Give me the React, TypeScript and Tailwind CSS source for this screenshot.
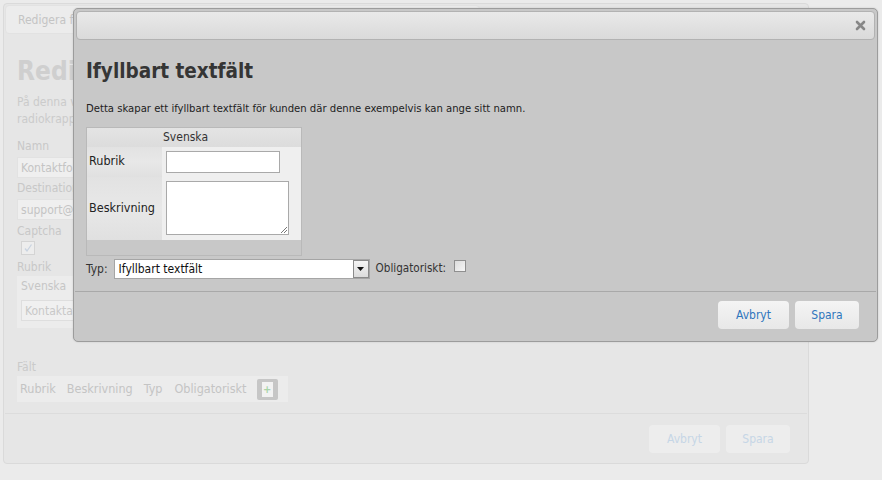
import React from "react";

const font = "font-['DejaVu_Sans_Condensed','DejaVu_Sans',sans-serif]";

function FadedField({ value }: { value: string }) {
  return (
    <div className="mt-[4px] flex h-[21px] w-[200px] items-center border border-[#e2e2e2] bg-[#efefef] px-[3px] text-[12px] text-[#c4c4c4]">
      {value}
    </div>
  );
}

function Background() {
  return (
    <div className="ml-[3px] mt-[3px] flex h-[461px] w-[806px] flex-col rounded-[4px] border border-[#dadada] bg-[#e6e6e6]">
      <div className="ml-[1px] mt-[1px] flex h-[29px] w-[475px] items-center rounded-[4px] border border-[#e2e2e2] bg-[#ececec] px-[12px] text-[12px] text-[#c4c4c4]">
        Redigera formulär
      </div>

      <div className="flex flex-1 flex-col px-[13px]">
        <h1 className="mt-[20px] text-[26px] font-bold leading-[34px] text-[#cfcfcf]">
          Redigera formulär
        </h1>
        <p className="mt-[6px] text-[12px] leading-[17px] text-[#cbcbcb]">
          På denna vy kan du redigera formuläret som visas i
          <br />
          radiokrappen
        </p>

        <div className="mt-[11px] text-[12px] leading-[14px] text-[#c8c8c8]">Namn</div>
        <FadedField value="Kontaktformulär" />
        <div className="mt-[3px] text-[12px] leading-[14px] text-[#c8c8c8]">Destination</div>
        <FadedField value="support@radiokrappen.se" />
        <div className="mt-[4px] text-[12px] leading-[14px] text-[#c8c8c8]">Captcha</div>
        <div className="ml-[4px] mt-[3px] flex h-[14px] w-[14px] items-center justify-center border border-[#d4d4d4] bg-[#ededed]">
          <svg width="10" height="10" viewBox="0 0 10 10">
            <path d="M2 5.5 L4 8 L8.5 1.5" fill="none" stroke="#c9d3e0" strokeWidth="1.3" />
          </svg>
        </div>
        <div className="mt-[5px] text-[12px] leading-[14px] text-[#c8c8c8]">Rubrik</div>
        <div className="mt-[2px] h-[52px] w-[260px] bg-[#ececec] px-[4px] pt-[3px]">
          <div className="text-[12px] leading-[15px] text-[#c6c6c6]">Svenska</div>
          <div className="mt-[6px] flex h-[21px] w-[240px] items-center border border-[#dedede] bg-[#f0f0f0] px-[3px] text-[12px] text-[#c8c8c8]">
            Kontaktaformulär
          </div>
        </div>

        <div className="mt-[32px] text-[12px] leading-[14px] text-[#cacaca]">Fält</div>
        <div className="mt-[2px] flex h-[26px] w-[271px] items-center bg-[#ececec] pl-[3px] text-[12.5px] text-[#c4c4c4]">
          <span>Rubrik</span>
          <span className="ml-[11px]">Beskrivning</span>
          <span className="ml-[11px]">Typ</span>
          <span className="ml-[12px]">Obligatoriskt</span>
          <span className="ml-[10px] flex h-[21px] w-[21px] items-center justify-center rounded-[2px] bg-[#c6c6c6]">
            <span className="flex h-[15px] w-[11px] items-center justify-center bg-[#f2f2f2] text-[11px] font-bold leading-none text-[#a8d4a8]">
              +
            </span>
          </span>
        </div>
      </div>

      <div className="mx-[1px] flex h-[50px] items-center justify-end gap-[6px] border-t border-[#dcdcdc] pr-[17px]">
        <div className="flex h-[28px] w-[71px] items-center justify-center rounded-[4px] bg-[#ededed] text-[12px] text-[#c6d6e6]">
          Avbryt
        </div>
        <div className="flex h-[28px] w-[64px] items-center justify-center rounded-[4px] bg-[#ededed] text-[12px] text-[#c6d6e6]">
          Spara
        </div>
      </div>
    </div>
  );
}

function Modal() {
  return (
    <div className="absolute left-[73px] top-[8px] flex h-[334px] w-[805px] flex-col rounded-[5px] border border-[#9c9c9c] bg-[#c8c8c8] shadow-[0_0_2px_rgba(0,0,0,0.15)]">
      <div className="mx-[2px] mt-[2px] flex h-[29px] items-center justify-end rounded-[4px] border border-[#b2b2b2] bg-gradient-to-b from-[#e9e9e9] to-[#dadada] pr-[8px]">
        <svg width="11" height="11" viewBox="0 0 11 11">
          <path d="M2 2 L9 9 M9 2 L2 9" stroke="#878787" strokeWidth="2.6" strokeLinecap="round" />
        </svg>
      </div>

      <div className="flex flex-1 flex-col px-[12px]">
        <h2 className="mt-[12px] text-[20.5px] font-bold leading-[38px] text-[#353535]">
          Ifyllbart textfält
        </h2>
        <p className="mt-[12px] text-[11.2px] leading-[14px] text-[#222]">
          Detta skapar ett ifyllbart textfält för kunden där denne exempelvis kan ange sitt namn.
        </p>

        <div className="mt-[11px] flex h-[129px] w-[216px] flex-col border border-[#b9b9b9]">
          <div className="flex h-[19px] shrink-0 bg-gradient-to-b from-[#e4e4e4] to-[#dcdcdc] text-[12px] leading-[19px] text-[#333]">
            <div className="w-[75px]" />
            <div className="pl-[1px]">Svenska</div>
          </div>
          <div className="flex h-[30px] shrink-0">
            <div className="flex w-[75px] items-center bg-gradient-to-b from-[#e2e2e2] via-[#e8e8e8] to-[#e0e0e0] pl-[2px] text-[12.5px] text-[#222]">
              Rubrik
            </div>
            <div className="flex-1 bg-[#efefef] pl-[4px] pt-[4px]">
              <div className="h-[22px] w-[114px] border border-[#a9a9a9] bg-white" />
            </div>
          </div>
          <div className="flex h-[63px] shrink-0">
            <div className="flex w-[75px] items-center bg-gradient-to-b from-[#e2e2e2] via-[#e8e8e8] to-[#e0e0e0] pl-[2px] text-[12.5px] text-[#222]">
              Beskrivning
            </div>
            <div className="flex-1 bg-[#efefef] pl-[4px] pt-[4px]">
              <div className="relative h-[54px] w-[123px] border border-[#a9a9a9] bg-white">
                <svg className="absolute bottom-[1px] right-[1px]" width="7" height="7" viewBox="0 0 7 7">
                  <path d="M1 7 L7 1 M4 7 L7 4" stroke="#777" strokeWidth="1" />
                </svg>
              </div>
            </div>
          </div>
        </div>

        <div className="mt-[3px] flex items-center text-[12px] text-[#333]">
          <span>Typ:</span>
          <div className="ml-[6px] flex h-[20px] w-[256px] items-center border border-[#a5a5a5] bg-white">
            <span className="flex-1 pl-[4px] text-[12px] text-[#111]">Ifyllbart textfält</span>
            <span className="flex h-[18px] w-[16px] items-center justify-center border border-[#8a8a8a] bg-gradient-to-b from-[#f4f4f4] to-[#dcdcdc]">
              <svg width="7" height="4" viewBox="0 0 7 4">
                <path d="M0 0 H7 L3.5 4 Z" fill="#111" />
              </svg>
            </span>
          </div>
          <span className="ml-[6px] text-[11.6px]">Obligatoriskt:</span>
          <span className="-mt-[6px] ml-[8px] h-[12px] w-[12px] border border-[#8f8f8f] bg-gradient-to-br from-[#dcdcdc] to-[#f6f6f6]" />
        </div>
      </div>

      <div className="mx-[1px] mt-[12px] flex h-[51px] items-start justify-end gap-[6px] border-t border-[#a9a9a9] pr-[17px] pt-[9px]">
        <div className="flex h-[28px] w-[71px] items-center justify-center rounded-[4px] bg-gradient-to-b from-[#f4f4f4] to-[#e8e8e8] text-[12px] text-[#2f76bd]">
          Avbryt
        </div>
        <div className="flex h-[28px] w-[64px] items-center justify-center rounded-[4px] bg-gradient-to-b from-[#f4f4f4] to-[#e8e8e8] text-[12px] text-[#2f76bd]">
          Spara
        </div>
      </div>
    </div>
  );
}

export default function App() {
  return (
    <div className={`relative h-[480px] w-[882px] overflow-hidden bg-[#ebebeb] ${font}`}>
      <Background />
      <Modal />
    </div>
  );
}
